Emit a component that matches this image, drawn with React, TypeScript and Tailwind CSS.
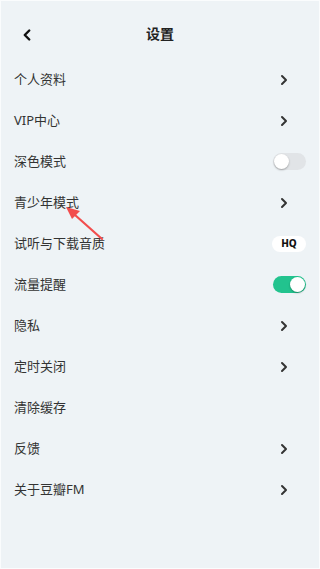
import { ChevronLeft, ChevronRight } from "lucide-react";

type Row = { label: string; kind: "chevron" | "off" | "on" | "hq" | "none" };

const rows: Row[] = [
  { label: "个人资料", kind: "chevron" },
  { label: "VIP中心", kind: "chevron" },
  { label: "深色模式", kind: "off" },
  { label: "青少年模式", kind: "chevron" },
  { label: "试听与下载音质", kind: "hq" },
  { label: "流量提醒", kind: "on" },
  { label: "隐私", kind: "chevron" },
  { label: "定时关闭", kind: "chevron" },
  { label: "清除缓存", kind: "none" },
  { label: "反馈", kind: "chevron" },
  { label: "关于豆瓣FM", kind: "chevron" },
];

const Toggle = ({ on }: { on: boolean }) => (
  <div
    className={`w-[33px] h-[17px] rounded-full flex items-center px-[1px] ${
      on ? "bg-[#22c38e] justify-end" : "bg-[#e1e4e7] justify-start"
    }`}
  >
    <div className="w-[15px] h-[15px] rounded-full bg-white shadow-[0_1px_2px_rgba(0,0,0,0.3)]" />
  </div>
);

const Trailing = ({ kind }: { kind: Row["kind"] }) => {
  if (kind === "chevron")
    return <ChevronRight className="w-[16px] h-[16px] text-[#333] mr-[14px]" strokeWidth={3} />;
  if (kind === "off") return <Toggle on={false} />;
  if (kind === "on") return <Toggle on />;
  if (kind === "hq")
    return (
      <div className="w-[34px] h-[16px] rounded-full bg-white flex items-center justify-center text-[10px] font-extrabold text-[#111]">
        HQ
      </div>
    );
  return null;
};

export default function App() {
  return (
    <div
      className="relative w-[320px] min-h-[569px] bg-[#eef3f6] border border-[#fafcfd] text-[#333]"
      style={{ fontFamily: '"Noto Sans", "Noto Sans CJK SC", sans-serif' }}
    >
      <header className="h-[58px] pt-[6px] flex items-center relative">
        <ChevronLeft className="absolute left-[17px] top-[25px] w-[18px] h-[18px] text-[#111]" strokeWidth={3.2} />
        <h1 className="flex-1 text-center text-[14px] font-bold text-[#222]">设置</h1>
      </header>
      <ul>
        {rows.map((r) => (
          <li key={r.label} className="h-[41px] flex items-center justify-between pl-[13px] pr-[13px]">
            <span className="text-[13px]">{r.label}</span>
            <Trailing kind={r.kind} />
          </li>
        ))}
      </ul>
      <svg className="absolute left-0 top-0 pointer-events-none" width="320" height="569">
        <line x1="101" y1="238" x2="74" y2="214" stroke="#f24d4d" strokeWidth="2.2" strokeLinecap="round" />
        <polygon points="65,206 79,210 71,218" fill="#f24d4d" />
      </svg>
    </div>
  );
}
